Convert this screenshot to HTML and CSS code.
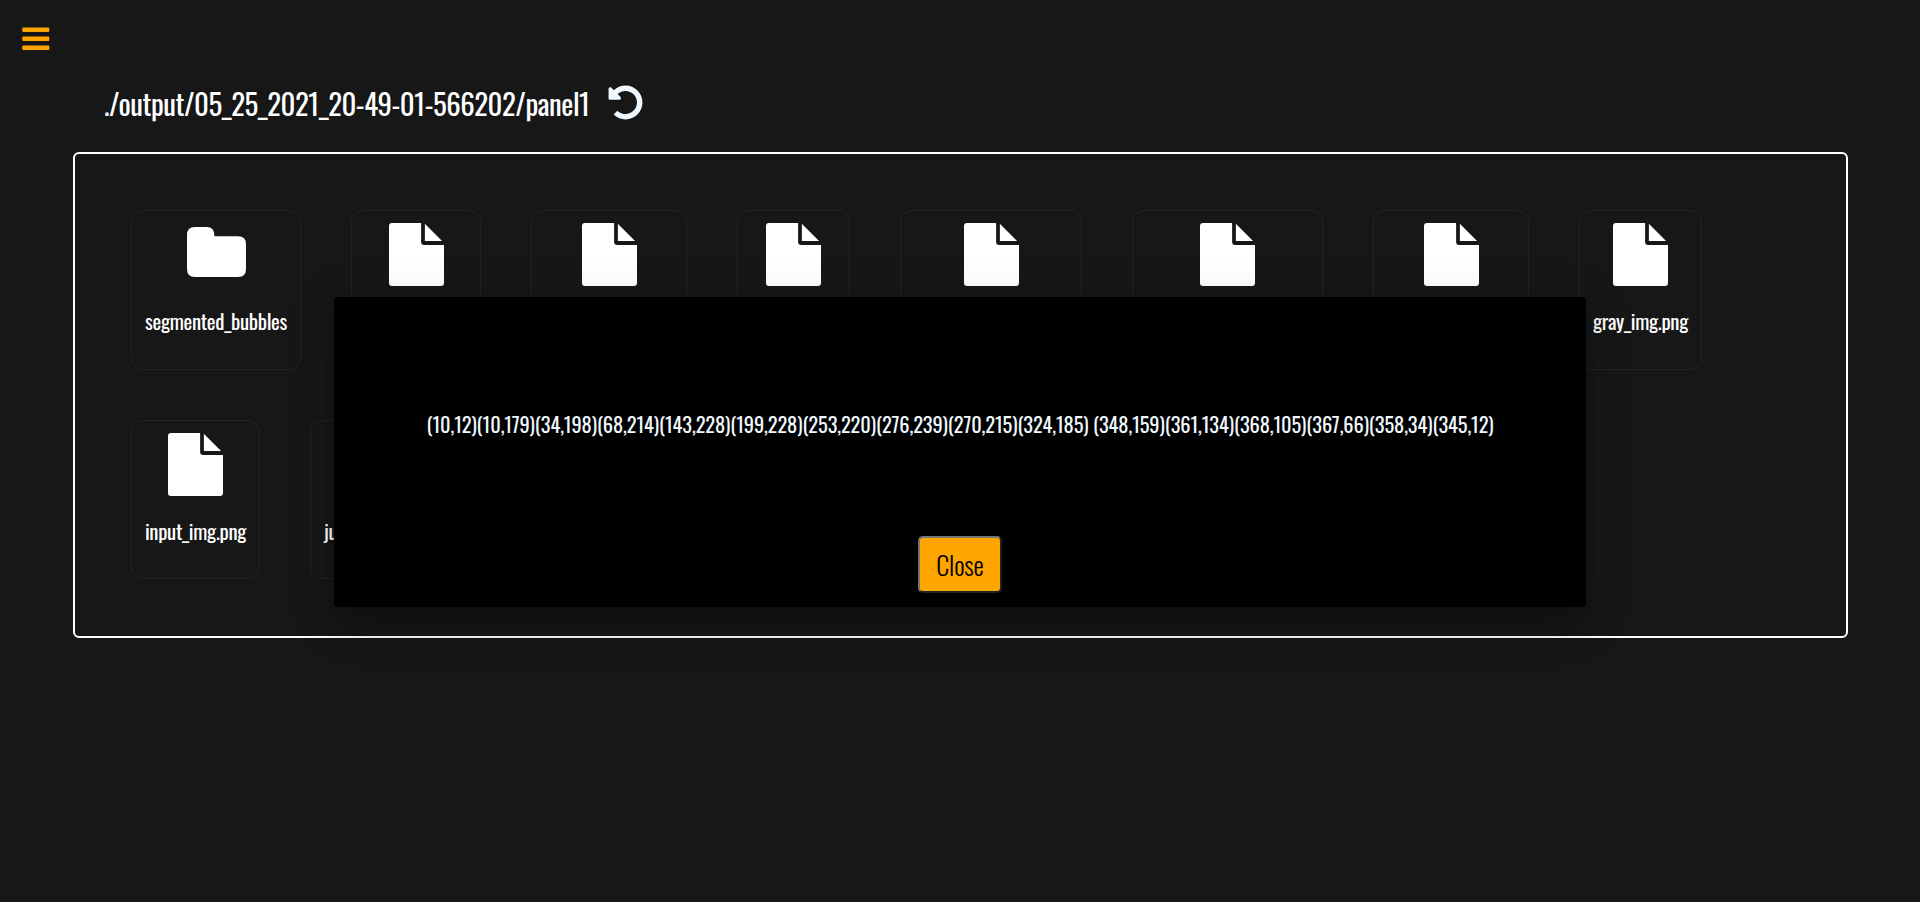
FILE: index.html
```html
<!DOCTYPE html>
<html lang="en">
<head>
<meta charset="utf-8">
<title>File explorer</title>
<link rel="stylesheet" href="styles.css">
</head>
<body>
<svg class="sprite" aria-hidden="true">
  <symbol id="file" viewBox="0 0 56 63" preserveAspectRatio="none">
    <path d="M3 0H32.7V18.8Q32.7 22 35.9 22H56V60Q56 63 53 63H3Q0 63 0 60V3Q0 0 3 0Z"/>
    <path d="M36.5.8 54 18H36.5Z"/>
  </symbol>
  <symbol id="folder" viewBox="0 0 60 50" preserveAspectRatio="none">
    <path d="M8 0H20Q28 0 28 9.2H52Q60 9.2 60 17.2V42Q60 50 52 50H8Q0 50 0 42V8Q0 0 8 0Z"/>
  </symbol>
</svg>

<header class="topbar">
  <svg class="menu" viewBox="0 0 28 23">
    <rect x="0.3" y="0.6" width="27" height="4.5" rx="1"/>
    <rect x="0.3" y="9.5" width="27" height="4.5" rx="1"/>
    <rect x="0.3" y="18.4" width="27" height="4.5" rx="1"/>
  </svg>
</header>

<div class="path">
  <span class="path-text">./output/05_25_2021_20-49-01-566202/panel1</span>
  <svg class="undo" viewBox="0 0 512 512"><path d="M255.545 8c-66.269.119-126.438 26.233-170.86 68.685L48.971 40.971C33.851 25.851 8 36.559 8 57.941V192c0 13.255 10.745 24 24 24h134.059c21.382 0 32.09-25.851 16.971-40.971l-41.75-41.75c30.864-28.899 70.801-44.907 113.23-45.273 92.398-.798 170.283 73.977 169.484 169.442C423.236 348.009 349.816 424 256 424c-41.127 0-79.997-14.678-110.63-41.556-4.743-4.161-11.906-3.908-16.368.553L89.34 422.659c-4.872 4.872-4.631 12.815.482 17.433C133.798 479.813 192.074 504 256 504c136.966 0 247.999-111.033 248-247.998C504.001 119.193 392.354 7.755 255.545 8z"/></svg>
</div>

<main class="panel">
  <div class="row">
    <div class="card" style="width:170px"><svg class="icon folder"><use href="#folder"/></svg><span class="label">segmented_bubbles</span></div>
    <div class="card" style="width:130px"><svg class="icon"><use href="#file"/></svg></div>
    <div class="card" style="width:156px"><svg class="icon"><use href="#file"/></svg></div>
    <div class="card" style="width:113px"><svg class="icon"><use href="#file"/></svg></div>
    <div class="card" style="width:182px"><svg class="icon"><use href="#file"/></svg></div>
    <div class="card" style="width:191px"><svg class="icon"><use href="#file"/></svg></div>
    <div class="card" style="width:156px"><svg class="icon"><use href="#file"/></svg></div>
    <div class="card" style="width:123px"><svg class="icon"><use href="#file"/></svg><span class="label">gray_img.png</span></div>
  </div>
  <div class="row last">
    <div class="card" style="width:129px"><svg class="icon"><use href="#file"/></svg><span class="label">input_img.png</span></div>
    <div class="card" style="width:130px"><svg class="icon"><use href="#file"/></svg><span class="label start">ju</span></div>
  </div>
</main>

<div class="dialog" role="dialog">
  <p class="coords">(10,12)(10,179)(34,198)(68,214)(143,228)(199,228)(253,220)(276,239)(270,215)(324,185) (348,159)(361,134)(368,105)(367,66)(358,34)(345,12)</p>
  <button class="close">Close</button>
</div>
</body>
</html>
```
FILE: styles.css
```css
* { box-sizing: border-box; }

body {
  margin: 0;
  height: 902px;
  overflow: hidden;
  background: #171717;
  color: #fff;
  font-family: Oswald, "Roboto Condensed", Roboto, sans-serif;
  font-size: 20px;
}

.sprite { position: absolute; width: 0; height: 0; }

.topbar { height: 82px; padding: 27px 22px 0; }
.menu { display: block; width: 28px; height: 23px; fill: orange; }

.path {
  display: flex;
  align-items: flex-start;
  gap: 19px;
  height: 70px;
  padding-left: 104px;
}
.path-text { width: 485px; font-size: 28.8px; line-height: 43px; letter-spacing: -0.46px; white-space: nowrap; }
.undo { width: 35px; height: 35px; margin-top: 3px; fill: aliceblue; }

.panel {
  display: flex;
  flex-direction: column;
  gap: 50px;
  width: 1775px;
  height: 486px;
  margin-left: 73px;
  padding: 56px;
  border: 2px solid #fff;
  border-radius: 6px;
}
.row { display: flex; gap: 50px; }
.card {
  display: flex;
  flex-direction: column;
  align-items: center;
  flex: none;
  gap: 20px;
  height: 160px;
  padding: 12px 0;
  border: 1px solid #242424;
  border-radius: 12px;
}
.last .card { height: 159px; }
.icon { width: 55px; height: 63px; fill: #fff; }
.icon.folder { width: 59px; height: 50px; margin: 4px 0 9px; }
.label { font-size: 20.8px; line-height: 30px; letter-spacing: -0.33px; white-space: nowrap; }
.label.start { align-self: flex-start; padding-left: 13px; }

.dialog {
  position: absolute;
  left: 334px;
  top: 297px;
  display: flex;
  flex-direction: column;
  align-items: center;
  justify-content: space-between;
  width: 1252px;
  height: 310px;
  padding: 112px 0 14px;
  background: #000;
  border-radius: 4px;
  box-shadow: 0 11px 15px -7px rgba(0, 0, 0, .1), 0 24px 38px 3px rgba(0, 0, 0, .12), 0 9px 46px 8px rgba(0, 0, 0, .1);
}
.coords { margin: 0; font-size: 20.4px; line-height: 30px; letter-spacing: -0.1px; color: aliceblue; white-space: nowrap; }
.close {
  width: 84px;
  height: 57px;
  padding: 0;
  border: 2px outset #767676;
  border-radius: 5px;
  background: orange;
  color: #000;
  font: 350 26px/38px Oswald, "Roboto Condensed", Roboto, sans-serif;
  letter-spacing: -0.2px;
}
```
